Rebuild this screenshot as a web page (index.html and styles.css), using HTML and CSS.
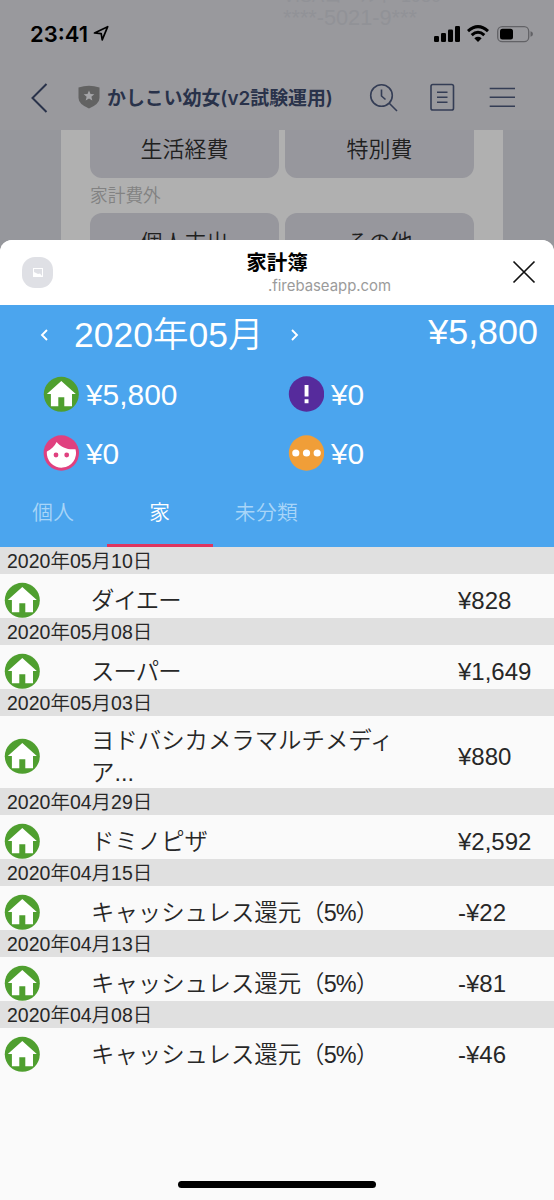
FILE: index.html
```html
<!DOCTYPE html>
<html lang="ja">
<head>
<meta charset="utf-8">
<title>家計簿</title>
<link rel="stylesheet" href="styles.css">
</head>
<body>
<svg width="0" height="0" class="defs">
  <symbol id="home" viewBox="0 0 36 36">
    <circle cx="18.300" cy="18.300" r="17.500" fill="#4f9f2f"/>
    <path d="M18.300 5 32.800 18H29V30.300H21.300V21.300H15.300V30.300H7.900V18H3.800Z" fill="#fff"/>
  </symbol>
</svg>
<div class="screen">
  <div class="backdrop">
    <div class="ghost"><span class="card">VISAコールド 1980</span><br>****-5021-9***</div>
    <div class="status">
      <span class="time">23:41</span>
      <svg class="locate" width="17" height="17" viewBox="0 0 17 17"><path d="M1.500 8 14.700 1.700 9.200 14.800 8.200 8.600Z" fill="none" stroke="#000" stroke-width="1.700" stroke-linejoin="round"/></svg>
      <svg class="signals" width="102" height="20" viewBox="0 0 102 20">
        <rect x="2" y="12" width="5" height="6" rx="1.200"/><rect x="9" y="9" width="5" height="9" rx="1.200"/><rect x="16" y="5.500" width="5" height="12.500" rx="1.200"/><rect x="23" y="2" width="5" height="16" rx="1.200"/>
        <g fill="none" stroke="#000" stroke-width="3"><path d="M36 7.100Q46 -1.800 56 7.100"/><path d="M39.700 11.100Q46 5.400 52.300 11.100"/></g>
        <path d="M42.300 14.200Q46 11.300 49.700 14.200L46 18Z"/>
        <rect x="65.700" y="2.700" width="31" height="15" rx="4.500" fill="none" stroke="#626266" stroke-width="1.300"/>
        <rect x="68" y="4.800" width="13" height="10.800" rx="2.500"/><path d="M98.500 7.300Q101 8 101 10T98.500 12.800Z" fill="#626266"/>
      </svg>
    </div>
    <div class="nav">
      <svg class="back" width="18" height="30" viewBox="0 0 18 30"><path d="M15.500 1 1.500 15 15.500 29" fill="none" stroke="#29324a" stroke-width="2"/></svg>
      <svg class="shield" width="22" height="24" viewBox="0 0 22 24"><path d="M.5 2.400Q11-.8 21.500 2.400V13Q21.500 19 11 23.500Q.5 19 .5 13Z" fill="#626262"/><path d="m11 5.500 1.500 3.500 3.800.3-2.900 2.500.9 3.700-3.300-2-3.300 2 .9-3.700L5.700 9.300 9.500 9Z" fill="#a5a5a8"/></svg>
      <span class="room">かしこい幼女(v2試験運用)</span>
      <svg class="tools" width="148" height="30" viewBox="0 0 148 30" fill="none" stroke="#343d55" stroke-width="1.600">
        <circle cx="12.500" cy="12.500" r="10.800"/><path d="M12.500 6.500V13L16.500 16.500M20 20 28 28"/>
        <rect x="62" y="1.500" width="22.500" height="25.500" rx="1.800"/><path d="M68 9.300H78.500M68 14.300H78.500M68 19.300H78.500M120.700 5.500H146M120.700 14.300H146M120.700 23.300H146"/>
      </svg>
    </div>
    <div class="chat">
      <div class="pair"><div class="choice first">生活経費</div><div class="choice first">特別費</div></div>
      <div class="caption">家計費外</div>
      <div class="pair"><div class="choice">個人支出</div><div class="choice">その他</div></div>
    </div>
  </div>
  <div class="sheet">
    <div class="sheet-head">
      <div class="avatar"><svg width="10" height="9" viewBox="0 0 10 9"><rect x=".5" y=".5" width="9" height="8" fill="none" stroke="#fff"/><path d="M1 8V4L3 5 5 6 7 5.500 9 8Z" fill="#fff"/></svg></div>
      <div class="titles"><div class="title">家計簿</div><div class="host">.firebaseapp.com</div></div>
      <svg class="close" width="24" height="24" viewBox="0 0 24 24"><path d="M1.500 1.500 22.500 22.500M22.500 1.500 1.500 22.500" stroke="#111" stroke-width="1.700"/></svg>
    </div>
    <div class="summary">
      <div class="month">
        <svg class="prev" width="8" height="12" viewBox="0 0 8 12"><path d="M7 1 2 6 7 11" fill="none" stroke="#fff" stroke-width="1.900"/></svg>
        <span class="label">2020年05月</span>
        <svg class="next" width="8" height="12" viewBox="0 0 8 12"><path d="M1 1 6 6 1 11" fill="none" stroke="#fff" stroke-width="1.900"/></svg>
        <span class="total">¥5,800</span>
      </div>
      <div class="kinds">
        <div class="kind"><svg width="36" height="36"><use href="#home"/></svg><span>¥5,800</span></div>
        <div class="kind"><svg width="36" height="36" viewBox="0 0 36 36"><circle cx="18.500" cy="18" r="17.700" fill="#562b9c"/><path d="M16.600 9H20.500V20.500H16.600ZM16.600 23.300H20.500V27.200H16.600Z" fill="#fff"/></svg><span>¥0</span></div>
        <div class="kind"><svg width="36" height="36" viewBox="0 0 36 36"><circle cx="18.300" cy="18" r="17.700" fill="#e0407f"/><path d="M13.600 7C18.300 12.500 24.800 15 32.500 14.200A14.600 14.600 0 1 1 3.900 16.500C8.300 14.500 11.600 11 13.600 7Z" fill="#fff"/><circle cx="13" cy="20" r="2.400" fill="#e0407f"/><circle cx="23.700" cy="20" r="2.400" fill="#e0407f"/></svg><span>¥0</span></div>
        <div class="kind"><svg width="36" height="36" viewBox="0 0 36 36"><circle cx="18.500" cy="18" r="17.700" fill="#f09e38"/><g fill="#fff"><circle cx="7.800" cy="18" r="3.600"/><circle cx="18.500" cy="18" r="3.600"/><circle cx="29.200" cy="18" r="3.600"/></g></svg><span>¥0</span></div>
      </div>
      <div class="tabs"><div class="tab">個人</div><div class="tab active">家</div><div class="tab">未分類</div></div>
    </div>
    <div class="list">
      <div class="date">2020年05月10日</div>
      <div class="row"><svg><use href="#home"/></svg><div class="name tight">ダイエー</div><div class="price">¥828</div></div>
      <div class="date">2020年05月08日</div>
      <div class="row"><svg><use href="#home"/></svg><div class="name tight">スーパー</div><div class="price">¥1,649</div></div>
      <div class="date">2020年05月03日</div>
      <div class="row tall"><svg><use href="#home"/></svg><div class="name">ヨドバシカメラマルチメディ<br>ア...</div><div class="price">¥880</div></div>
      <div class="date">2020年04月29日</div>
      <div class="row"><svg><use href="#home"/></svg><div class="name">ドミノピザ</div><div class="price">¥2,592</div></div>
      <div class="date">2020年04月15日</div>
      <div class="row"><svg><use href="#home"/></svg><div class="name">キャッシュレス還元<span class="rate">（5%）</span></div><div class="price">-¥22</div></div>
      <div class="date">2020年04月13日</div>
      <div class="row"><svg><use href="#home"/></svg><div class="name">キャッシュレス還元<span class="rate">（5%）</span></div><div class="price">-¥81</div></div>
      <div class="date">2020年04月08日</div>
      <div class="row"><svg><use href="#home"/></svg><div class="name">キャッシュレス還元<span class="rate">（5%）</span></div><div class="price">-¥46</div></div>
    </div>
    <div class="home-bar"></div>
  </div>
</div>
</body>
</html>
```
FILE: styles.css
```css
* { box-sizing: border-box; }
body { margin: 0; font-family: "Liberation Sans", "Noto Sans CJK JP", sans-serif; font-weight: 350; }
svg { display: block; flex: none; }
.defs { position: absolute; }
.screen { width: 554px; height: 1200px; overflow: hidden; background: #96979c; display: flex; flex-direction: column; }
.backdrop { height: 240px; flex: none; position: relative; overflow: hidden; white-space: nowrap; }
.ghost { position: absolute; left: 283px; top: -16px; font: 21.700px/22px "Liberation Sans", "Noto Sans CJK JP", sans-serif; color: #919297; }
.card { font-size: 18px; }
.status { height: 68px; display: flex; align-items: flex-start; padding: 21px 20px 0 30px; background: #99999d; }
.time { font: 600 22px/26px Inter, "Liberation Sans", sans-serif; width: 58px; }
.locate { margin: 4px 0 0 5px; }
.signals { margin: 3px 0 0 auto; }
.nav { height: 62px; display: flex; align-items: flex-start; padding: 15px 0 0 31px; background: #99999d; }
.back { margin-right: 29px; }
.shield { margin: 2px 7px 0 0; }
.room { width: 225px; font-family: Inter, "Noto Sans CJK JP", sans-serif; font-size: 18.900px; line-height: 31px; font-weight: 600; color: #29324a; }
.tools { margin-left: 37px; }
.chat { width: 442px; height: 110px; margin-left: 61px; padding: 0 29px; background: #b0b0b0; }
.pair { display: grid; grid-template-columns: 189px 189px; gap: 6px; }
.choice { height: 60px; border-radius: 12px; background: #97979d; text-align: center; font-size: 22px; line-height: 60px; color: #202020; }
.choice.first { height: 48px; border-radius: 0 0 12px 12px; line-height: 39px; }
.caption { height: 35px; font-size: 17.700px; line-height: 37px; color: #828282; }
.sheet { flex: 1; display: flex; flex-direction: column; background: #fafafa; border-radius: 12px 12px 0 0; overflow: hidden; }
.sheet-head { height: 65px; flex: none; background: #fff; display: grid; grid-template-columns: 100px 1fr 100px; }
.avatar { width: 31px; height: 31px; border-radius: 13px; background: #dfe0e5; margin: 17px 0 0 22px; display: grid; place-items: center; }
.titles { text-align: center; padding-top: 9px; }
.title { font-size: 20.500px; line-height: 28px; font-weight: 700; }
.host { padding-left: 105px; font: 14.900px/18px Inter, sans-serif; color: #9b9b9b; }
.close { margin: 20px 0 0 58px; }
.summary { height: 242px; flex: none; background: #4ba5ee; color: #fff; display: flex; flex-direction: column; }
.month { height: 59px; display: flex; align-items: flex-start; padding: 0 16px 0 40px; }
.prev, .next { margin-top: 24px; }
.label { width: 190px; margin: 4px 27px 0 26px; font-size: 35.500px; line-height: 52px; white-space: nowrap; }
.total { margin-left: auto; font-size: 35.900px; line-height: 54px; }
.kinds { display: grid; grid-template-columns: 245px 245px; row-gap: 23px; padding: 12px 0 0 43px; }
.kind { height: 36px; display: flex; align-items: center; gap: 7px; font-size: 29.900px; line-height: 36px; }
.kind span { padding-top: 2px; }
.tabs { margin-top: auto; height: 71px; display: flex; }
.tab { width: 106.600px; text-align: center; font-size: 20.700px; line-height: 73px; color: #a8d5f8; letter-spacing: .4px; }
.tab.active { color: #fff; border-bottom: 3px solid #de355f; }
.list { flex: 1; color: #272727; }
.date { height: 27px; background: #e0e0e0; padding-left: 7px; font-size: 19.500px; line-height: 29px; }
.row { height: 44px; padding: 8px 0 0 4px; display: flex; align-items: center; }
.row.tall { height: 72px; }
.row svg { width: 36px; height: 36px; }
.name { width: 368px; padding: 1px 0 0 51px; font-size: 23.400px; line-height: 32px; white-space: nowrap; }
.name.tight { letter-spacing: -.9px; }
.rate { letter-spacing: -.8px; }
.price { font-size: 24px; line-height: 32px; padding-left: 50px; padding-top: 2px; }
.home-bar { width: 198px; height: 7px; border-radius: 4px; background: #000; margin: 0 auto 12px; }
```
